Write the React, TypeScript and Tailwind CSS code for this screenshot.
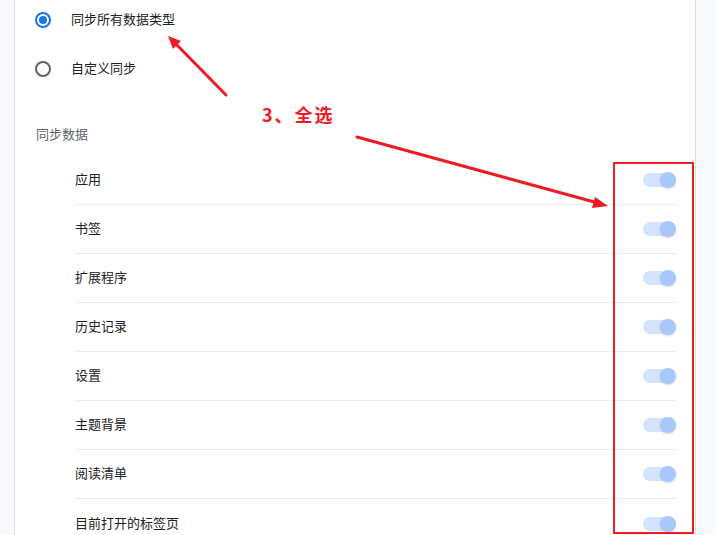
import React from "react";

const items = ["应用", "书签", "扩展程序", "历史记录", "设置", "主题背景", "阅读清单", "目前打开的标签页"];

function Radio({ checked }: { checked?: boolean }) {
    return (
        <span
            className={`flex h-4 w-4 shrink-0 items-center justify-center rounded-full border-2 ${
                checked ? "border-[#1a73e8]" : "border-[#5f6368]"
            }`}
        >
            {checked && <span className="h-2 w-2 rounded-full bg-[#1a73e8]" />}
        </span>
    );
}

function Toggle() {
    return (
        <span className="relative flex h-4 w-[33px] shrink-0 items-center">
            <span className="h-[14px] w-[30px] rounded-full bg-[#d3e3fd]" />
            <span className="absolute right-0 h-4 w-4 rounded-full bg-[#a8c7fa] shadow-[0_1px_2px_rgba(0,0,0,0.15)]" />
        </span>
    );
}

export default function App() {
    return (
        <main
            className="relative flex h-[535px] w-[716px] items-start overflow-hidden bg-[#f8f9fa] text-[13px] text-[#202124]"
            style={{ fontFamily: '"Noto Sans", "Noto Sans CJK SC", sans-serif' }}
        >
            <div className="w-[14px] shrink-0" />

            {/* Settings card */}
            <section className="min-h-[535px] w-[682px] shrink-0 border-x border-[#dcdde0] bg-white px-5">
                <div className="flex h-10 items-center gap-5">
                    <Radio checked />
                    <span>同步所有数据类型</span>
                </div>
                <div className="mt-[5px] flex h-12 items-center gap-5">
                    <Radio />
                    <span>自定义同步</span>
                </div>

                <div className="pt-[31px] pl-px leading-5 text-[#5f6368]">同步数据</div>

                <div className="mt-3 -mr-px pl-10">
                    {items.map((label, i) => (
                        <div
                            key={label}
                            className={`flex h-[49px] items-center justify-between ${
                                i < items.length - 1 ? "border-b border-[#e8eaed]" : ""
                            }`}
                        >
                            <span>{label}</span>
                            <Toggle />
                        </div>
                    ))}
                </div>
            </section>

            {/* Annotation */}
            <div className="absolute left-[613px] top-[162px] h-[372px] w-[81px] border-2 border-[#ed1c24]" />
            <div
                className="absolute left-[262px] top-[101px] text-[18px] font-bold tracking-[2px] text-[#ed1c24]"
                style={{ fontFamily: '"Noto Sans CJK SC", sans-serif' }}
            >
                3、全选
            </div>
            <svg className="absolute left-0 top-0" width="716" height="535" viewBox="0 0 716 535">
                <g stroke="#ed1c24" strokeWidth="3" strokeLinecap="round" fill="#ed1c24">
                    <line x1="226" y1="95" x2="175" y2="43" />
                    <line x1="357" y1="137" x2="598" y2="203" />
                </g>
                <polygon points="168,36 181,41 173,49" fill="#ed1c24" />
                <polygon points="608,206 595,197 592,208" fill="#ed1c24" />
            </svg>
        </main>
    );
}
